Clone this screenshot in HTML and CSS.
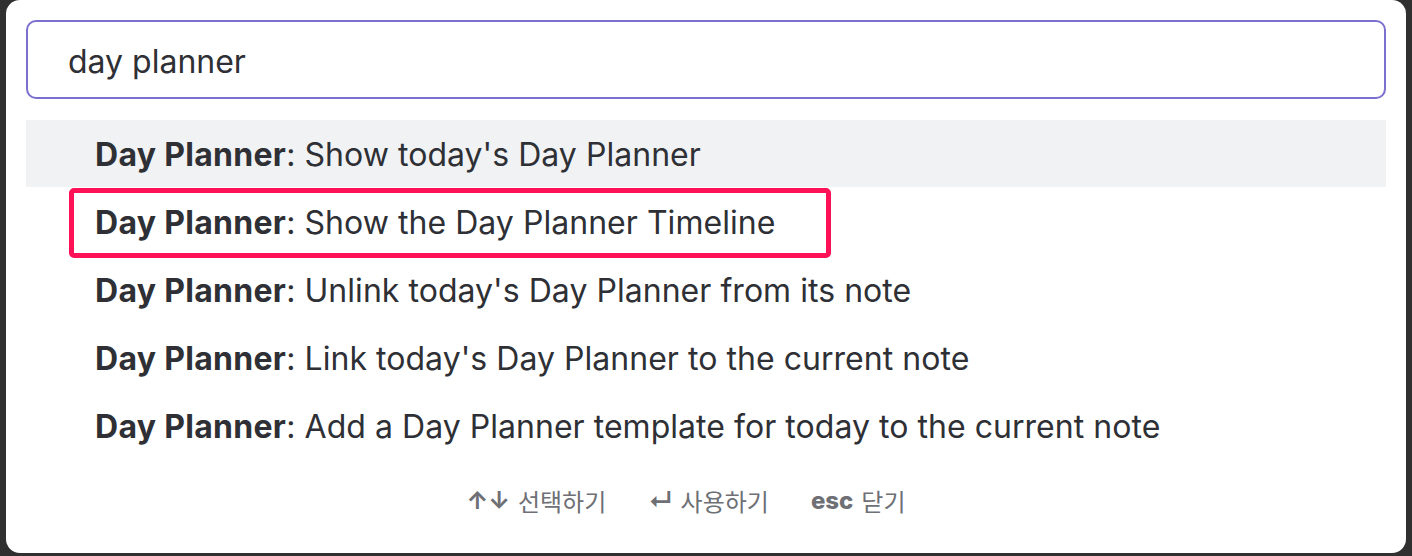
FILE: index.html
```html
<!DOCTYPE html>
<html lang="ko">
<head>
<meta charset="utf-8">
<link rel="stylesheet" href="styles.css">
</head>
<body>
<div class="modal">
  <div class="search">day planner</div>
  <ul class="results">
    <li class="item selected"><b>Day Planner</b>: Show today's Day Planner</li>
    <li class="item marked"><b>Day Planner</b>: Show the Day Planner Timeline<span class="highlight"></span></li>
    <li class="item"><b>Day Planner</b>: Unlink today's Day Planner from its note</li>
    <li class="item"><b>Day Planner</b>: Link today's Day Planner to the current note</li>
    <li class="item"><b>Day Planner</b>: Add a Day Planner template for today to the current note</li>
  </ul>
  <div class="footer">
    <span class="hint"><span class="key">↑↓</span> 선택하기</span>
    <span class="hint"><span class="key">↵</span> 사용하기</span>
    <span class="hint"><span class="key esc">esc</span> 닫기</span>
  </div>
</div>
</body>
</html>
```
FILE: styles.css
```css
html, body {
  margin: 0;
  padding: 0;
  background: #303030;
  height: 556px;
  overflow: hidden;
}
body {
  font-family: Inter, "Noto Sans CJK KR", sans-serif;
  color: #2e3035;
}
.modal {
  margin: 0 6px;
  height: 553px;
  box-sizing: border-box;
  background: #ffffff;
  border-radius: 14px;
  padding: 20px 20px 0;
  display: flex;
  flex-direction: column;
}
.search {
  height: 79px;
  box-sizing: border-box;
  border: 2px solid #7b6fd0;
  border-radius: 10px;
  padding: 4px 0 0 40px;
  display: flex;
  align-items: center;
  font-size: 32px;
  color: #2e3035;
}
.results {
  list-style: none;
  margin: 21px 0 0;
  padding: 0;
}
.item {
  position: relative;
  height: 68px;
  display: flex;
  align-items: center;
  padding: 2px 0 0 69px;
  box-sizing: border-box;
  font-size: 32px;
  letter-spacing: 0.04px;
  white-space: pre;
}
.item b {
  font-weight: 700;
  letter-spacing: 0.3px;
}
.item.selected {
  background: #f1f2f4;
  height: 67px;
}
.highlight {
  position: absolute;
  left: 43px;
  top: 1px;
  width: 762px;
  height: 70px;
  box-sizing: border-box;
  border: 5px solid #ff1158;
  border-radius: 5px;
}
.footer {
  display: flex;
  justify-content: center;
  gap: 42px;
  margin-top: 24px;
  padding-right: 40px;
  font-size: 24px;
  color: #6e7075;
}
.hint {
  display: flex;
  align-items: center;
  gap: 8px;
}
.key {
  font-weight: 700;
}
.esc {
  font-weight: 800;
}
```
